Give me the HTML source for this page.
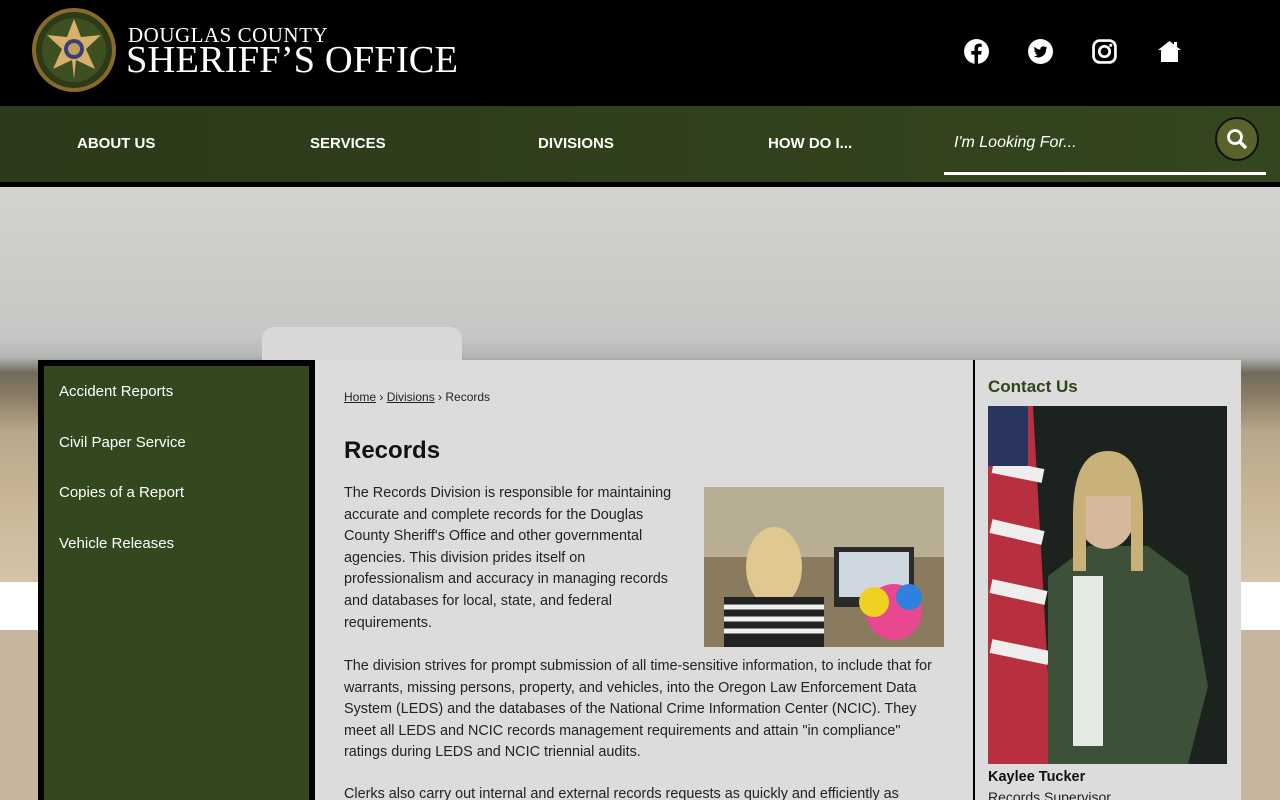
<!DOCTYPE html>
<html style="width:1280px;height:800px;overflow:hidden"><head><meta charset="utf-8"><style>
*{margin:0;padding:0;box-sizing:border-box}
body{width:1280px;height:800px;overflow:hidden;font-family:"Liberation Sans",Arial,sans-serif;background:#c4b59c;position:relative}
.top{position:absolute;left:0;top:0;width:1280px;height:106px;background:#000}
.nav{position:absolute;left:0;top:106px;width:1280px;height:76px;background:linear-gradient(90deg,#2b3a1a,#34461f)}
.bar{position:absolute;left:0;top:182px;width:1280px;height:5px;background:#000}
.hero{position:absolute;left:0;top:187px;width:1280px;height:395px;background:linear-gradient(180deg,#d4d3d0 0%,#c6c6c4 38%,#b4b6b4 43%,#6f6a5c 47%,#8a7d66 53%,#b8a78a 62%,#c9b797 80%,#d4c4a8 100%)}
.white{position:absolute;left:0;top:582px;width:1280px;height:48px;background:#fff}
.navitem{position:absolute;top:135px;color:#fff;font-weight:bold;font-size:15px}
.side{position:absolute;left:38px;top:360px;width:277px;height:440px;background:#000;padding:6px 6px 0}
.side .in{background:#344820;height:100%;padding-top:17px}
.side a{display:block;color:#fff;font-size:15px;padding:0 0 0 15px;height:50.5px;text-decoration:none}
.main{position:absolute;left:315px;top:360px;width:658px;height:440px;overflow:hidden;background:#dcdcdc;padding:29px 29px 0;color:#222;font-size:14.4px;line-height:21.6px}
.right{position:absolute;left:973px;top:360px;width:268px;height:440px;overflow:hidden;background:#dcdcdc;border-left:2px solid #000;padding:16px 0 0 13px}
</style></head><body>
<div class="top">
 <svg style="position:absolute;left:31px;top:7px" width="86" height="86" viewBox="0 0 86 86">
  <circle cx="43" cy="43" r="42" fill="#8a6a2a"/><circle cx="43" cy="43" r="38" fill="#2c3a18"/>
  <circle cx="43" cy="43" r="32" fill="#3e4f22"/>
  <polygon points="43,12 50,30 70,28 55,42 64,62 45,53 43,72 41,53 22,62 31,42 16,28 36,30" fill="#d7b06a"/>
  <circle cx="43" cy="42" r="10" fill="#3c3e7a"/><circle cx="43" cy="42" r="6" fill="#c0a060"/>
 </svg>
 <div style="position:absolute;left:128px;top:24px;color:#fff;font-family:'Liberation Serif',serif;font-size:21px;line-height:22px;letter-spacing:0.5px">DOUGLAS COUNTY</div>
 <div style="position:absolute;left:126px;top:40px;color:#fff;font-family:'Liberation Serif',serif;font-size:38.5px;line-height:40px;letter-spacing:0.1px">SHERIFF’S OFFICE</div>
 <svg style="position:absolute;left:964px;top:39px" width="25" height="25" viewBox="0 0 24 24"><circle cx="12" cy="12" r="12" fill="#fff"/><path d="M13.5 24V15h3l.5-3.5h-3.5V9.3c0-1 .3-1.7 1.7-1.7H17V4.5c-.3 0-1.4-.1-2.6-.1-2.6 0-4.3 1.6-4.3 4.5v2.6H7V15h3.1v9z" fill="#000"/></svg>
 <svg style="position:absolute;left:1028px;top:39px" width="25" height="25" viewBox="0 0 24 24"><circle cx="12" cy="12" r="12" fill="#fff"/><path d="M18.5 8.2c-.5.2-1 .4-1.5.4.6-.3 1-.9 1.2-1.5-.5.3-1.1.5-1.7.7a2.7 2.7 0 0 0-4.6 2.4c-2.2-.1-4.2-1.2-5.5-2.8-.7 1.2-.3 2.8.8 3.6-.4 0-.8-.1-1.2-.3 0 1.3.9 2.4 2.2 2.7-.4.1-.8.1-1.2 0 .3 1.1 1.4 1.9 2.5 1.9A5.4 5.4 0 0 1 5.5 16.4 7.6 7.6 0 0 0 17.3 9.6c.5-.4 1-.8 1.2-1.4z" fill="#000"/></svg>
 <svg style="position:absolute;left:1092px;top:39px" width="25" height="25" viewBox="0 0 24 24"><rect x="1.5" y="1.5" width="21" height="21" rx="6" fill="none" stroke="#fff" stroke-width="2.6"/><circle cx="12" cy="12" r="5" fill="none" stroke="#fff" stroke-width="2.6"/><circle cx="18" cy="6" r="1.5" fill="#fff"/></svg>
 <svg style="position:absolute;left:1157px;top:40px" width="25" height="22" viewBox="0 0 25 22"><path d="M12.5 1 1 10h3v12h17V10h3z" fill="#fff"/><rect x="17" y="2" width="3" height="5" fill="#fff"/></svg>
</div>
<div class="nav"></div>
<div class="navitem" style="left:77px">ABOUT US</div>
<div class="navitem" style="left:310px">SERVICES</div>
<div class="navitem" style="left:538px">DIVISIONS</div>
<div class="navitem" style="left:768px">HOW DO I...</div>
<div style="position:absolute;left:954px;top:134px;color:#fff;font-style:italic;font-size:16px">I'm Looking For...</div>
<div style="position:absolute;left:944px;top:172px;width:322px;height:3px;background:#fff"></div>
<div style="position:absolute;left:1215px;top:117px;width:44px;height:44px;border-radius:50%;background:#58622a;border:2px solid #111"></div>
<svg style="position:absolute;left:1225px;top:127px" width="24" height="24" viewBox="0 0 24 24"><circle cx="10" cy="10" r="6.5" fill="none" stroke="#fff" stroke-width="2.8"/><path d="M15 15l5 5" stroke="#fff" stroke-width="3.4" stroke-linecap="round"/></svg>
<div class="bar"></div>
<div class="hero">
 <div style="position:absolute;left:262px;top:140px;width:200px;height:40px;background:#d8d8d8;border-radius:12px 12px 0 0"></div>
</div>
<div class="white"></div>
<div class="side"><div class="in">
 <a>Accident Reports</a><a>Civil Paper Service</a><a>Copies of a Report</a><a>Vehicle Releases</a>
</div></div>
<div class="main">
 <div style="font-size:12px;line-height:16px;margin-top:0"><u>Home</u> › <u>Divisions</u> › Records</div>
 <div style="font-size:24px;font-weight:bold;margin:32px 0 22px;line-height:28px;color:#111">Records</div>
 <svg style="float:right;margin:0 0 3px 20px" width="240" height="160" viewBox="0 0 240 160">
  <rect width="240" height="160" fill="#8a7a5e"/><rect x="0" y="0" width="240" height="70" fill="#b8ae94"/>
  <rect x="130" y="60" width="80" height="60" fill="#2a2a2a"/><rect x="135" y="65" width="70" height="45" fill="#cfd8e0"/>
  <ellipse cx="70" cy="80" rx="28" ry="40" fill="#e0c890"/><rect x="20" y="110" width="100" height="50" fill="#222"/>
  <path d="M20 120h100M20 132h100M20 144h100" stroke="#eee" stroke-width="5"/>
  <circle cx="190" cy="125" r="28" fill="#e84890"/><circle cx="170" cy="115" r="15" fill="#f0d020"/><circle cx="205" cy="110" r="13" fill="#3080e0"/>
 </svg>
 <p style="margin-top:-4px">The Records Division is responsible for maintaining accurate and complete records for the Douglas County Sheriff's Office and other governmental agencies. This division prides itself on professionalism and accuracy in managing records and databases for local, state, and federal requirements.</p>
 <p style="clear:both;padding-top:6px;width:592px">The division strives for prompt submission of all time-sensitive information, to include that for warrants, missing persons, property, and vehicles, into the Oregon Law Enforcement Data System (LEDS) and the databases of the National Crime Information Center (NCIC). They meet all LEDS and NCIC records management requirements and attain "in compliance" ratings during LEDS and NCIC triennial audits.</p>
 <p style="margin-top:20px">Clerks also carry out internal and external records requests as quickly and efficiently as</p>
</div>
<div class="right">
 <div style="color:#2f4419;font-weight:bold;font-size:17px;line-height:22px">Contact Us</div>
 <svg style="display:block;margin-top:8px" width="239" height="358" viewBox="0 0 239 358">
  <rect width="239" height="358" fill="#1c221e"/>
  <path d="M0 0h45l20 358H0z" fill="#b83040"/><path d="M5 60l50 10M3 120l52 12M3 180l55 12M3 240l58 12" stroke="#eee" stroke-width="14"/>
  <rect x="0" y="0" width="40" height="60" fill="#2a3560"/>
  <path d="M60 358V170l40-30h60l40 30 20 110-20 78z" fill="#3d5038"/>
  <path d="M85 170l30 0 0 170-30 0z" fill="#e6e8e6"/>
  <ellipse cx="118" cy="105" rx="30" ry="38" fill="#d8b89a"/>
  <path d="M85 110q0-65 35-65 35 0 35 65v55h-12v-75h-45v75h-13z" fill="#c9b27a"/>
 </svg>
 <div style="font-weight:bold;font-size:14.5px;margin-top:5px;color:#111">Kaylee Tucker</div>
 <div style="font-size:14px;margin-top:4px;color:#222">Records Supervisor</div>
</div>
</body></html>
